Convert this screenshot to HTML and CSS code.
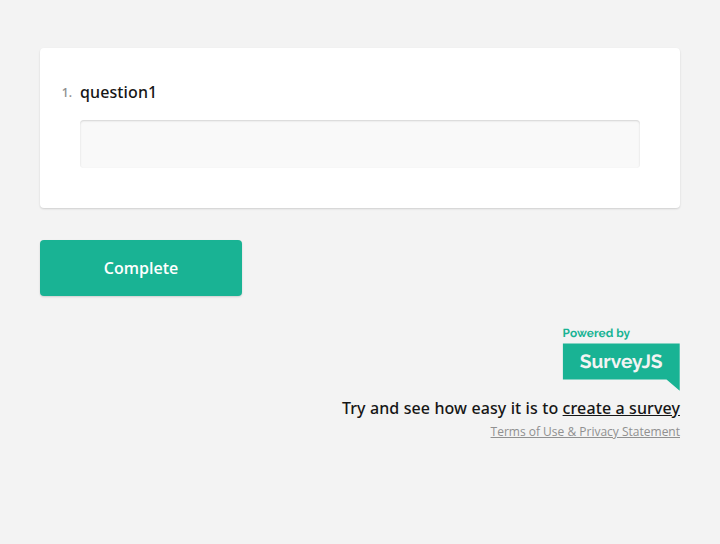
FILE: index.html
```html
<!DOCTYPE html>
<html lang="en">
<head>
<meta charset="utf-8">
<title>Survey</title>
<link rel="stylesheet" href="styles.css">
</head>
<body>
<main class="survey">
  <section class="card">
    <div class="question-head"><span class="number">1.</span><label class="question-title" for="q1">question1</label></div>
    <input class="question-input" id="q1" type="text">
  </section>
  <button class="complete" type="button">Complete</button>
  <footer class="footer">
    <svg class="logo" width="118" height="66" viewBox="0 0 118 66">
      <path d="M.9 18.4H117.7V65.7L104.5 54.6H.9Z"/>
      <text class="powered" x=".6" y="12" textLength="67.5">Powered by</text>
      <text class="brand" x="17.8" y="42.8" textLength="82.8">SurveyJS</text>
    </svg>
    <p class="promo">Try and see how easy it is to <a href="#">create a survey</a></p>
    <a class="terms" href="#">Terms of Use &amp; Privacy Statement</a>
  </footer>
</main>
</body>
</html>
```
FILE: styles.css
```css
* { box-sizing: border-box; }
body {
  margin: 0;
  min-height: 100vh;
  background: #f3f3f3;
  font-family: "Open Sans", sans-serif;
  color: #161616;
}
.survey { padding: 48px 40px; }
.card {
  height: 160px;
  padding: 32px 40px 40px 20px;
  background: #fff;
  border-radius: 4px;
  box-shadow: 0 1px 2px rgba(0, 0, 0, .15);
}
.question-head { display: flex; align-items: center; height: 24px; }
.number { width: 20px; padding-right: 8px; display: flex; justify-content: flex-end; font-size: 12px; font-weight: 600; color: #909090; }
.question-title { font-family: "Noto Sans", "Open Sans", sans-serif; font-size: 16px; font-weight: 500; line-height: 24px; letter-spacing: .11px; }
.question-input {
  display: block;
  width: 560px;
  height: 48px;
  margin: 16px 0 0 20px;
  padding: 12px 16px;
  border: 0;
  border-radius: 4px;
  background: #f9f9f9;
  box-shadow: inset 0 1px 2px rgba(0, 0, 0, .15);
}
.complete {
  display: block;
  width: 202px;
  height: 56px;
  margin-top: 32px;
  border: 0;
  border-radius: 4px;
  background: #19b394;
  box-shadow: 0 1px 2px rgba(0, 0, 0, .15);
  color: #fff;
  font: 600 16px/24px "Open Sans", sans-serif;
}
.footer { display: flex; flex-direction: column; align-items: flex-end; margin-top: 29px; }
.logo { fill: #19b394; font-family: Raleway, Lato, sans-serif; font-weight: 700; text-rendering: geometricPrecision; }
.powered { font-size: 11.8px; }
.brand { font-size: 19.2px; fill: #f3f3f3; }
.promo { margin: 5px 0 0; font-family: "Noto Sans", "Open Sans", sans-serif; font-size: 16px; font-weight: 500; line-height: 24px; letter-spacing: .11px; }
.promo a { color: inherit; }
.terms { font-size: 12px; line-height: 24px; color: #909090; }
```
